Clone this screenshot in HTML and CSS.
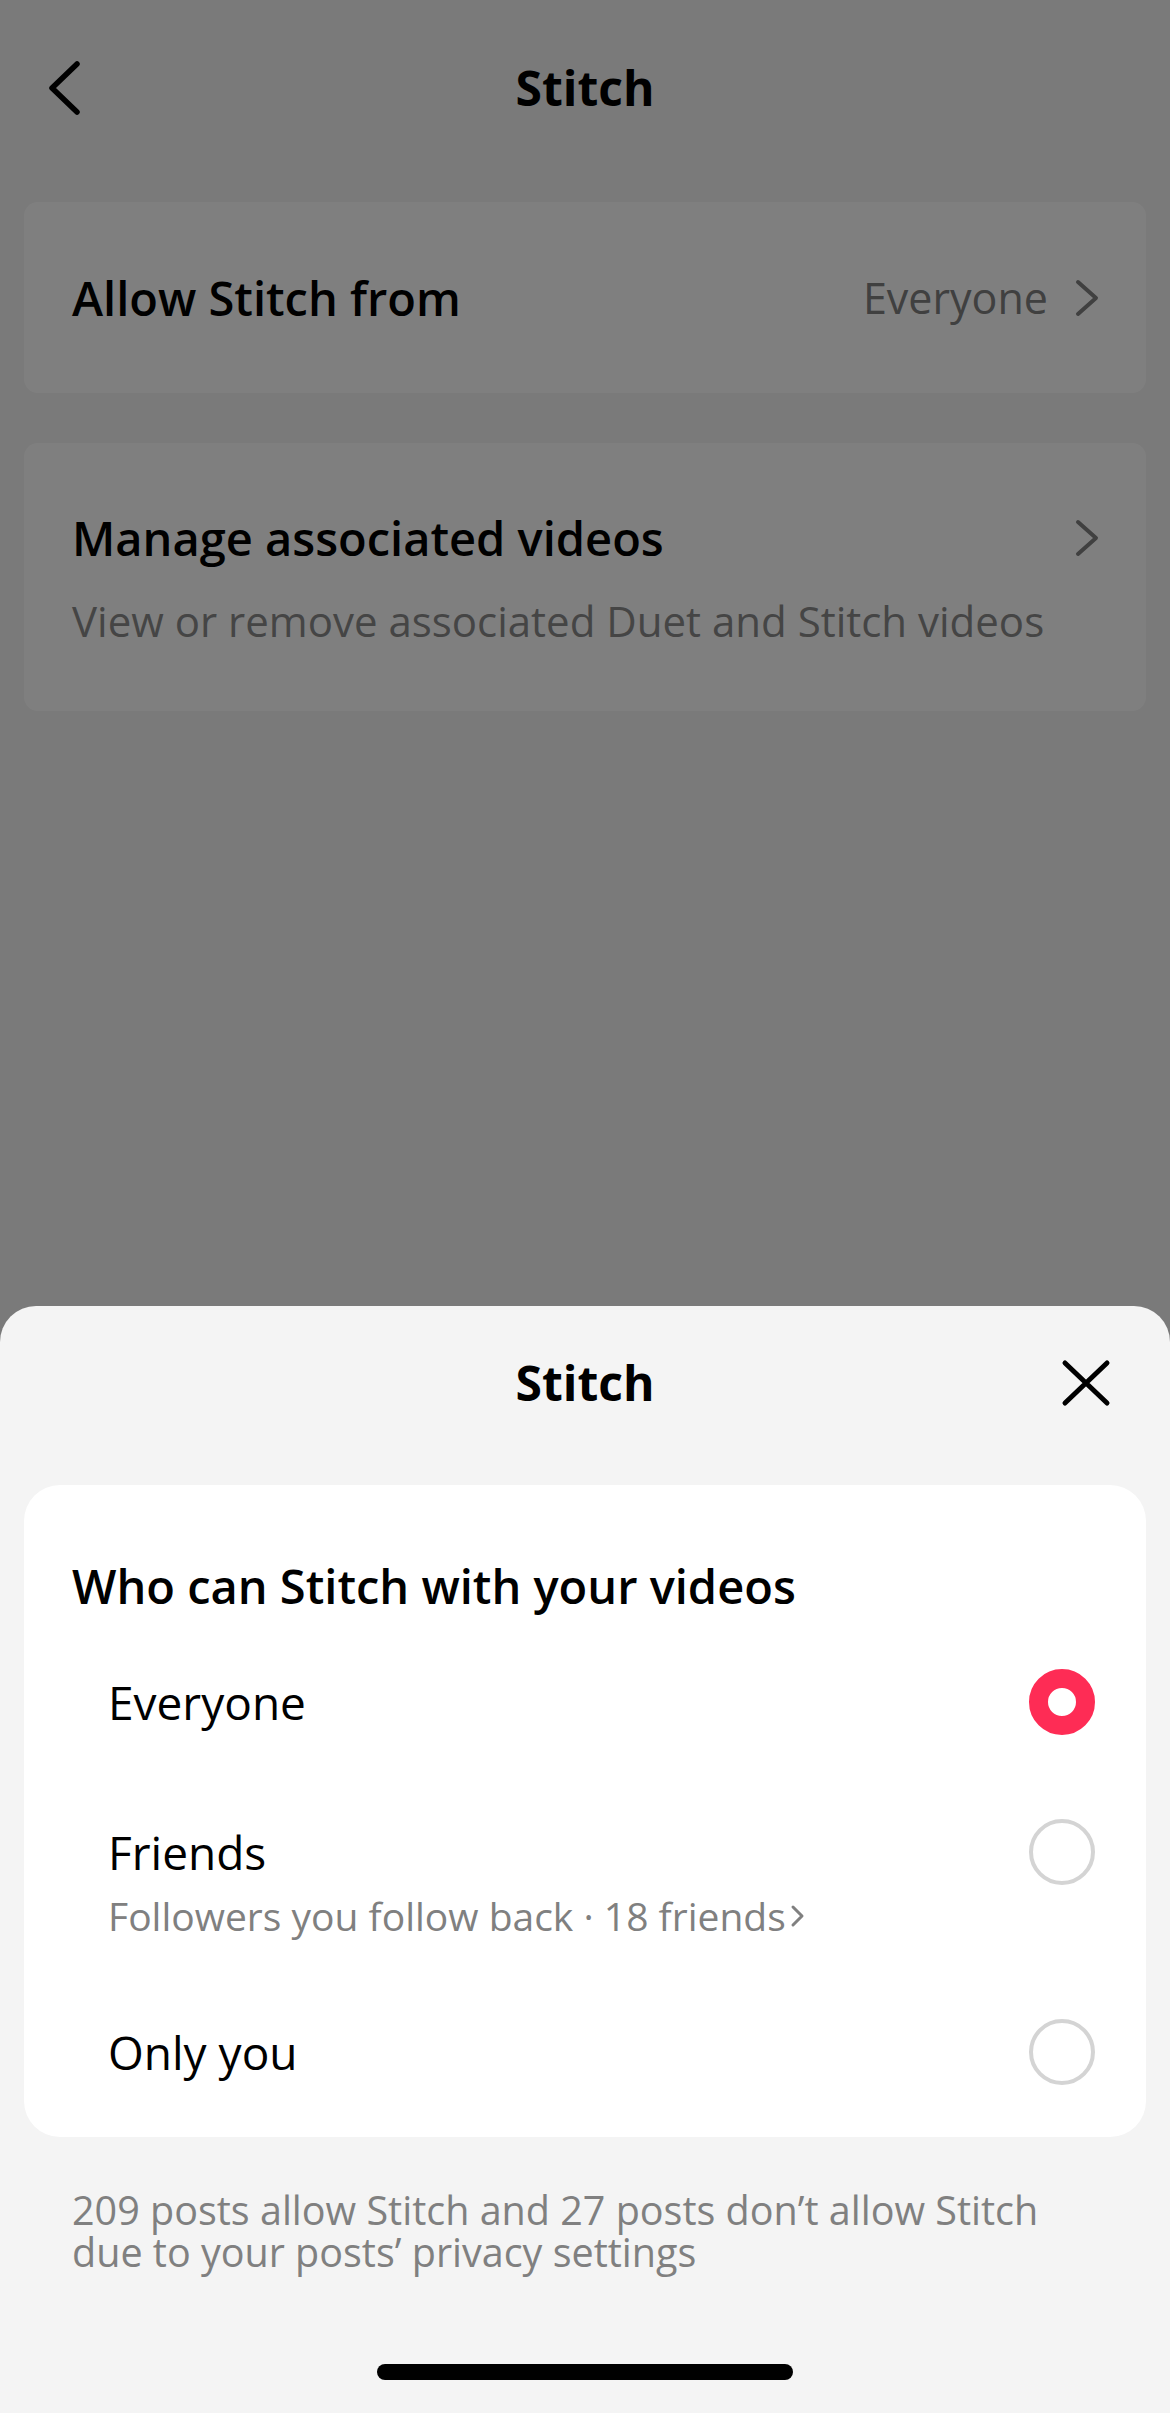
FILE: index.html
```html
<!DOCTYPE html>
<html>
	<head>
		<meta charset="UTF-8">
		<meta name="viewport" content="width=device-width,user-scalable=no" />
		<title>Stitch</title>
		<link rel="stylesheet" href="styles.css">
	</head>
	<body>
		<section class="page">
			<header class="bar">
				<a href="javascript:;" class="back">
					<svg width="36" height="56" viewBox="0 0 36 56"><polyline points="30,4 5,28 30,52" /></svg>
				</a>
				<h1 class="bar-title">Stitch</h1>
				<span></span>
			</header>
			<div class="card">
				<div class="row">
					<span class="row-title">Allow Stitch from</span>
					<span class="row-value">Everyone</span>
					<svg class="arrow" width="26" height="40" viewBox="0 0 26 40"><polyline points="4,4 22,20 4,36" /></svg>
				</div>
			</div>
			<div class="card card-tall">
				<div class="row-line">
					<span class="row-title">Manage associated videos</span>
					<svg class="arrow" width="26" height="40" viewBox="0 0 26 40"><polyline points="4,4 22,20 4,36" /></svg>
				</div>
				<p class="row-desc">View or remove associated Duet and Stitch videos</p>
			</div>
		</section>

		<div class="mask"></div>

		<section class="sheet">
			<header class="bar sheet-bar">
				<span></span>
				<h2 class="bar-title">Stitch</h2>
				<a href="javascript:;" class="close">
					<svg width="50" height="50" viewBox="0 0 50 50"><path d="M4 5 L46 45 M46 5 L4 45" /></svg>
				</a>
			</header>
			<div class="options">
				<h3 class="options-title">Who can Stitch with your videos</h3>
				<div class="option opt-first">
					<span class="opt-name">Everyone</span>
					<i class="radio on"></i>
				</div>
				<div class="option opt-friends">
					<div>
						<div class="opt-name">Friends</div>
						<div class="opt-sub">Followers you follow back · 18 friends<svg width="16" height="28" viewBox="0 0 16 28"><polyline points="3,5 12,14 3,23" /></svg></div>
					</div>
					<i class="radio"></i>
				</div>
				<div class="option opt-last">
					<span class="opt-name">Only you</span>
					<i class="radio"></i>
				</div>
			</div>
			<p class="note">209 posts allow Stitch and 27 posts don’t allow Stitch due to your posts’ privacy settings</p>
			<div class="home"></div>
		</section>
	</body>
</html>
```

FILE: styles.css
```css
html, body{
	margin: 0;
	height: 2413px;
	overflow: hidden;
}
body{
	position: relative;
	background: #f4f4f4;
	font-family: "Open Sans", Roboto, sans-serif;
	color: #000;
}
h1, h2, h3, p{
	margin: 0;
	font-weight: normal;
}
a{
	color: inherit;
}
svg polyline, svg path{
	fill: none;
	stroke: currentColor;
	stroke-linecap: round;
	stroke-linejoin: round;
}

/* top bar */
.bar{
	height: 176px;
	display: grid;
	grid-template-columns: 1fr auto 1fr;
	align-items: center;
}
.bar-title{
	font-size: 48px;
	font-weight: 700;
	line-height: 60px;
}
.back{
	display: flex;
	padding-left: 47px;
}
.back svg polyline{
	stroke-width: 5.5;
}

/* setting cards */
.card{
	margin: 26px 24px 0;
	height: 191px;
	background: #fff;
	border-radius: 14px;
	padding: 0 46px 0 48px;
	display: flex;
	flex-direction: column;
	justify-content: center;
}
.card-tall{
	margin-top: 50px;
	height: 268px;
}
.row, .row-line{
	display: flex;
	align-items: center;
}
.row-title{
	flex: 1;
	font-size: 47px;
	font-weight: 600;
	line-height: 60px;
}
.row-value{
	font-size: 43px;
	line-height: 60px;
	color: #808080;
	margin-right: 26px;
}
.arrow{
	color: #808080;
}
.arrow polyline{
	stroke-width: 4;
}
.row-desc{
	margin-top: 28px;
	font-size: 42px;
	line-height: 50px;
	color: #8a8a8a;
}

.mask{
	position: absolute;
	left: 0;
	top: 0;
	right: 0;
	bottom: 0;
	background: rgba(0,0,0,0.5);
}

/* bottom sheet */
.sheet{
	position: absolute;
	left: 0;
	right: 0;
	bottom: 0;
	height: 1107px;
	background: #f4f4f4;
	border-radius: 36px 36px 0 0;
	display: flex;
	flex-direction: column;
}
.sheet-bar{
	height: 154px;
	flex: none;
}
.close{
	justify-self: end;
	display: flex;
	padding-right: 59px;
}
.close path{
	stroke-width: 5;
}
.options{
	margin: 25px 24px 0;
	background: #fff;
	border-radius: 36px;
	padding: 71px 51px 15px 48px;
}
.options-title{
	font-size: 47px;
	font-weight: 600;
	line-height: 60px;
}
.option{
	display: flex;
	align-items: center;
	justify-content: space-between;
	padding: 40px 0 40px 36px;
}
.opt-first{
	margin-top: 16px;
}
.opt-friends{
	align-items: flex-start;
	padding-top: 50px;
}
.opt-last{
	padding-top: 41px;
}
.opt-name{
	font-size: 46px;
	line-height: 60px;
}
.opt-sub{
	margin-top: 9px;
	font-size: 39px;
	line-height: 50px;
	color: #808080;
	display: flex;
	align-items: center;
}
.opt-sub svg{
	margin-left: 4px;
}
.opt-sub polyline{
	stroke-width: 3;
}
.radio{
	width: 66px;
	height: 66px;
	margin: -3px 0;
	box-sizing: border-box;
	border-radius: 50%;
	border: 4px solid #d4d4d4;
	background: #fff;
	flex: none;
}
.radio.on{
	border: 19.5px solid #fe2c55;
}
.note{
	margin: 52px 73px 0 72px;
	font-size: 39.5px;
	line-height: 42px;
	color: #808080;
}
.home{
	margin: auto auto 33px;
	width: 416px;
	height: 16px;
	border-radius: 8px;
	background: #000;
}
```
